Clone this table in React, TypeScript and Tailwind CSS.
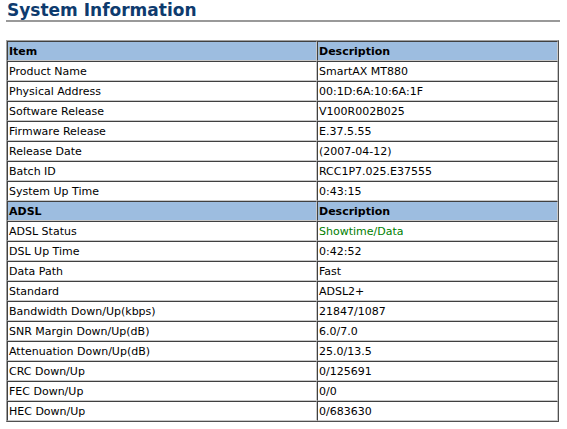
const systemRows: [string, string][] = [
  ["Product Name", "SmartAX MT880"],
  ["Physical Address", "00:1D:6A:10:6A:1F"],
  ["Software Release", "V100R002B025"],
  ["Firmware Release", "E.37.5.55"],
  ["Release Date", "(2007-04-12)"],
  ["Batch ID", "RCC1P7.025.E37555"],
  ["System Up Time", "0:43:15"],
];

const adslRows: [string, string][] = [
  ["ADSL Status", "Showtime/Data"],
  ["DSL Up Time", "0:42:52"],
  ["Data Path", "Fast"],
  ["Standard", "ADSL2+"],
  ["Bandwidth Down/Up(kbps)", "21847/1087"],
  ["SNR Margin Down/Up(dB)", "6.0/7.0"],
  ["Attenuation Down/Up(dB)", "25.0/13.5"],
  ["CRC Down/Up", "0/125691"],
  ["FEC Down/Up", "0/0"],
  ["HEC Down/Up", "0/683630"],
];

const cell =
  "h-[20px] px-[1px] pt-[2px] pb-0 border border-t-[#404040] border-l-[#404040] border-b-[#c8c8c8] border-r-[#c8c8c8] align-middle leading-[16px]";

function HeaderRow({ left }: { left: string }) {
  return (
    <tr className="bg-[#9dbde0] font-bold">
      <td className={cell}>{left}</td>
      <td className={cell}>Description</td>
    </tr>
  );
}

function DataRow({ label, value, green }: { label: string; value: string; green?: boolean }) {
  return (
    <tr>
      <td className={cell}>{label}</td>
      <td className={`${cell} ${green ? "text-[#008000]" : ""}`}>{value}</td>
    </tr>
  );
}

export default function App() {
  return (
    <div className="w-[567px] h-[429px] bg-white font-['DejaVu_Sans',Verdana,sans-serif] text-black overflow-hidden">
      <div className="pl-[6px] pr-[7px] pt-[1px]">
        <h1 className="text-[17px] font-bold leading-[18px] text-[#0e3b6e] pl-[1px] border-b-2 border-[#999999] pb-[1px]">
          System Information
        </h1>
        <table className="mt-[18px] w-[553px] border-separate border-spacing-0 text-[11px] border border-t-[#a0a0a0] border-l-[#a0a0a0] border-b-[#505050] border-r-[#505050]">
          <colgroup>
            <col className="w-[310px]" />
            <col />
          </colgroup>
          <tbody>
            <HeaderRow left="Item" />
            {systemRows.map(([l, v]) => (
              <DataRow key={l} label={l} value={v} />
            ))}
            <HeaderRow left="ADSL" />
            {adslRows.map(([l, v]) => (
              <DataRow key={l} label={l} value={v} green={l === "ADSL Status"} />
            ))}
          </tbody>
        </table>
      </div>
    </div>
  );
}
